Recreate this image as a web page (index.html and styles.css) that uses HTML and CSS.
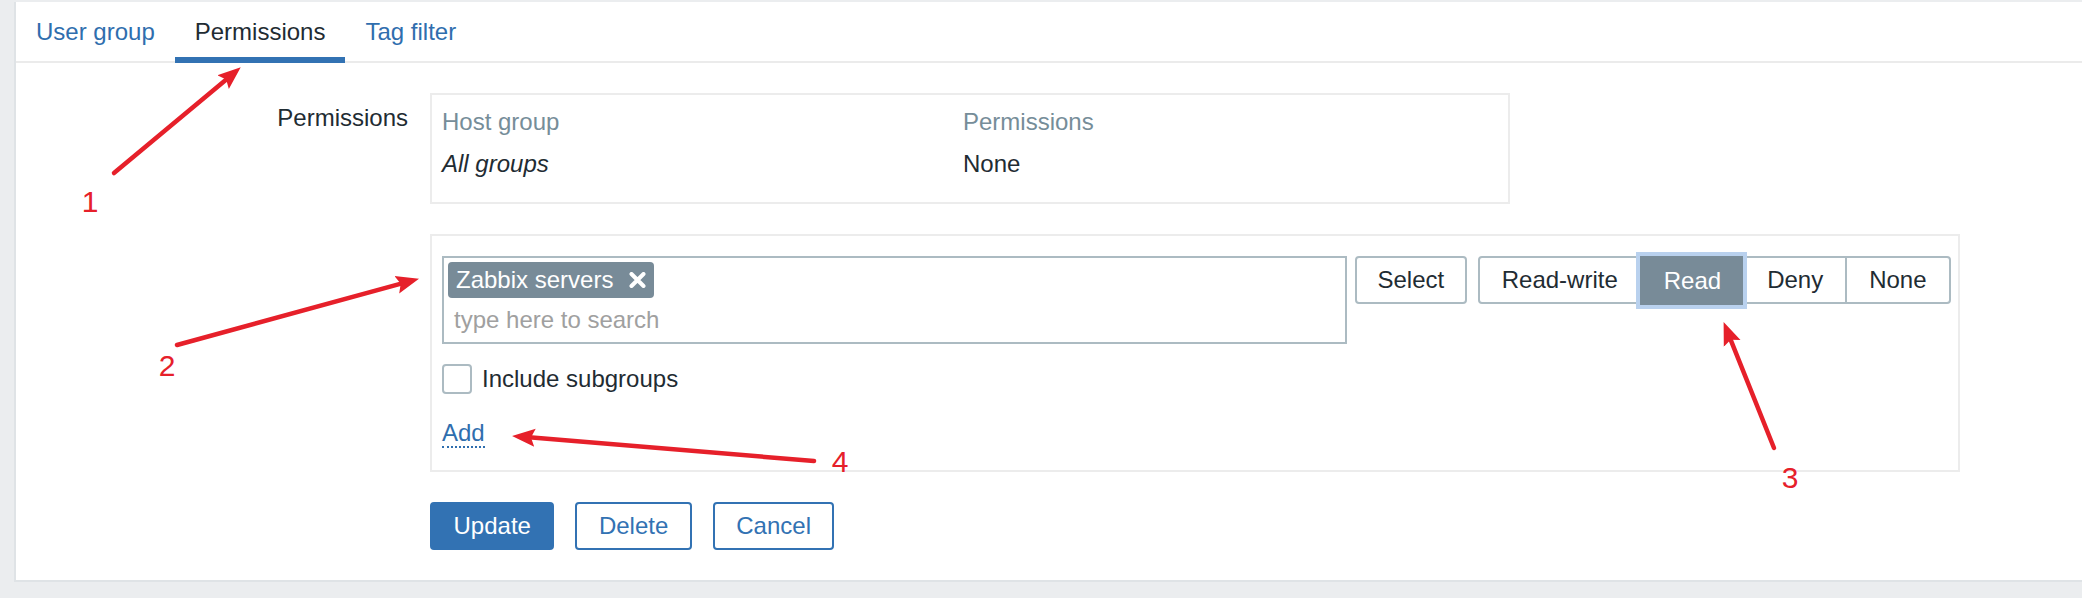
FILE: index.html
```html
<!DOCTYPE html>
<html lang="en">
<head>
<meta charset="utf-8">
<title>User group – Permissions</title>
<link rel="stylesheet" href="styles.css">
</head>
<body>
<div class="panel">
  <nav class="tabs">
    <a class="tab">User group</a>
    <a class="tab active">Permissions</a>
    <a class="tab">Tag filter</a>
  </nav>
  <div class="form">
    <div class="label">Permissions</div>
    <div class="perm-table">
      <div class="cell head">Host group</div>
      <div class="cell head">Permissions</div>
      <div class="cell italic">All groups</div>
      <div class="cell">None</div>
    </div>

    <div class="label"></div>
    <div class="add-box">
      <div class="ms-row">
        <div class="ms">
          <div class="chips">
            <span class="chip">Zabbix servers
              <svg class="chip-x" width="17" height="16" viewBox="0 0 17 16"><path d="M2.5 2 L14.5 14 M14.5 2 L2.5 14" stroke="#fff" stroke-width="4" stroke-linecap="round"/></svg>
            </span>
          </div>
          <div class="ms-input">type here to search</div>
        </div>
        <button class="btn-grey">Select</button>
        <div class="radio">
          <span class="seg">Read-write</span>
          <span class="seg selected">Read</span>
          <span class="seg">Deny</span>
          <span class="seg">None</span>
        </div>
      </div>
      <label class="check-row"><span class="checkbox"></span><span>Include subgroups</span></label>
      <div class="add-row"><a class="link-add">Add</a></div>
    </div>

    <div class="label"></div>
    <div class="buttons">
      <button class="btn primary">Update</button>
      <button class="btn alt">Delete</button>
      <button class="btn alt">Cancel</button>
    </div>
  </div>
</div>

<svg class="annot" width="2082" height="598" viewBox="0 0 2082 598">
  <defs>
    <marker id="ah" markerUnits="userSpaceOnUse" markerWidth="24" markerHeight="20" refX="12" refY="10" orient="auto">
      <path d="M0 1 L23 10 L0 19 L4 10 Z" fill="#e6202a"/>
    </marker>
  </defs>
  <g stroke="#e6202a" stroke-width="4.5" stroke-linecap="round" fill="none">
    <line x1="114" y1="173" x2="232.3" y2="74.4" marker-end="url(#ah)"/>
    <line x1="177" y1="345" x2="408.4" y2="281.6" marker-end="url(#ah)"/>
    <line x1="1774" y1="448" x2="1727.7" y2="332.3" marker-end="url(#ah)"/>
    <line x1="814" y1="461" x2="523" y2="436.8" marker-end="url(#ah)"/>
  </g>
  <g class="nums" fill="#e6202a">
    <text x="90" y="212" text-anchor="middle">1</text>
    <text x="167" y="376" text-anchor="middle">2</text>
    <text x="1790" y="488" text-anchor="middle">3</text>
    <text x="840" y="472" text-anchor="middle">4</text>
  </g>
</svg>
</body>
</html>
```

FILE: styles.css
```css
html, body {
  margin: 0;
}
body {
  padding: 2px 0 0 14px;
  height: 598px;
  box-sizing: border-box;
  overflow: hidden;
  position: relative;
  background: #ebedef;
  font-family: "Liberation Sans", Arial, sans-serif;
  font-size: 24px;
  color: #1f2c33;
}

.panel {
  background: #fff;
  border-left: 2px solid #dfe3e6;
  border-bottom: 2px solid #dfe3e6;
  height: 580px;
  box-sizing: border-box;
}

.tabs {
  display: flex;
  align-items: flex-start;
  height: 61px;
  box-sizing: border-box;
  border-bottom: 2px solid #ebebeb;
}
.tab {
  height: 61px;
  box-sizing: border-box;
  padding: 16px 20px 0;
  line-height: 27px;
  border-bottom: 6px solid transparent;
  color: #2f6eae;
  cursor: pointer;
}
.tab.active {
  color: #1f2c33;
  border-bottom-color: #3272b3;
}

.form {
  display: grid;
  grid-template-columns: 392px auto;
  column-gap: 22px;
  row-gap: 30px;
  padding-top: 30px;
  align-items: start;
  justify-items: start;
}
.label {
  justify-self: stretch;
  text-align: right;
  padding-top: 10px;
  line-height: 30px;
}

.perm-table {
  width: 1080px;
  box-sizing: border-box;
  border: 2px solid #ececec;
  padding: 6px 0 17px;
  display: grid;
  grid-template-columns: 521px 1fr;
}
.cell {
  padding: 6px 10px;
  line-height: 30px;
}
.cell.head {
  color: #768d99;
}
.cell.italic {
  font-style: italic;
}

.add-box {
  width: 1530px;
  box-sizing: border-box;
  border: 2px solid #ececec;
  padding: 20px 8px 22px 10px;
}
.ms-row {
  display: flex;
  align-items: flex-start;
  white-space: nowrap;
}
.ms-row > * {
  flex-shrink: 0;
}
.ms {
  width: 905px;
  box-sizing: border-box;
  border: 2px solid #acbbc2;
}
.chips {
  padding: 4px 4px 0;
  display: flex;
}
.chip {
  display: inline-flex;
  align-items: center;
  gap: 16px;
  height: 36px;
  padding: 0 8px;
  border-radius: 4px;
  background: #788b98;
  color: #fff;
  line-height: 36px;
}
.chip-x {
  display: block;
}
.ms-input {
  padding: 7px 10px;
  line-height: 30px;
  color: #a0a0a0;
}

.btn-grey {
  margin-left: 8px;
  height: 48px;
  box-sizing: border-box;
  padding: 0 20.5px;
  border: 2px solid #acbbc2;
  border-radius: 4px;
  background: #fff;
  font: inherit;
  color: #1f2c33;
  line-height: 44px;
}

.radio {
  margin-left: 11px;
  display: flex;
  height: 48px;
  box-sizing: border-box;
  border: 2px solid #acbbc2;
  border-radius: 4px;
}
.seg {
  padding: 0 22px;
  line-height: 44px;
  border-left: 2px solid #acbbc2;
  white-space: nowrap;
}
.seg:first-child {
  border-left: none;
}
.seg.selected {
  position: relative;
  z-index: 1;
  margin: -2px 0 -3px;
  line-height: 49px;
  height: 49px;
  background: #788b98;
  border-left-color: #788b98;
  color: #fff;
  box-shadow: 0 0 0 4px #b9d1ee;
}

.check-row {
  margin-top: 20px;
  display: flex;
  align-items: center;
  gap: 10px;
  line-height: 30px;
}
.checkbox {
  width: 30px;
  height: 30px;
  box-sizing: border-box;
  border: 2px solid #acbbc2;
  border-radius: 4px;
  background: #fff;
}

.add-row {
  margin-top: 24px;
  line-height: 30px;
}
.link-add {
  color: #2f6eae;
  border-bottom: 2px dotted #2f6eae;
  cursor: pointer;
}

.buttons {
  display: flex;
  gap: 21px;
}
.btn {
  height: 48px;
  box-sizing: border-box;
  padding: 0 21.5px;
  border: 2px solid #3272b3;
  border-radius: 4px;
  font: inherit;
  line-height: 44px;
}
.btn.primary {
  background: #3272b3;
  color: #fff;
}
.btn.alt {
  background: #fff;
  color: #3272b3;
}

.annot {
  position: absolute;
  top: 0;
  left: 0;
  pointer-events: none;
}
.nums text {
  font-family: "Liberation Sans", Arial, sans-serif;
  font-size: 30px;
}
```
